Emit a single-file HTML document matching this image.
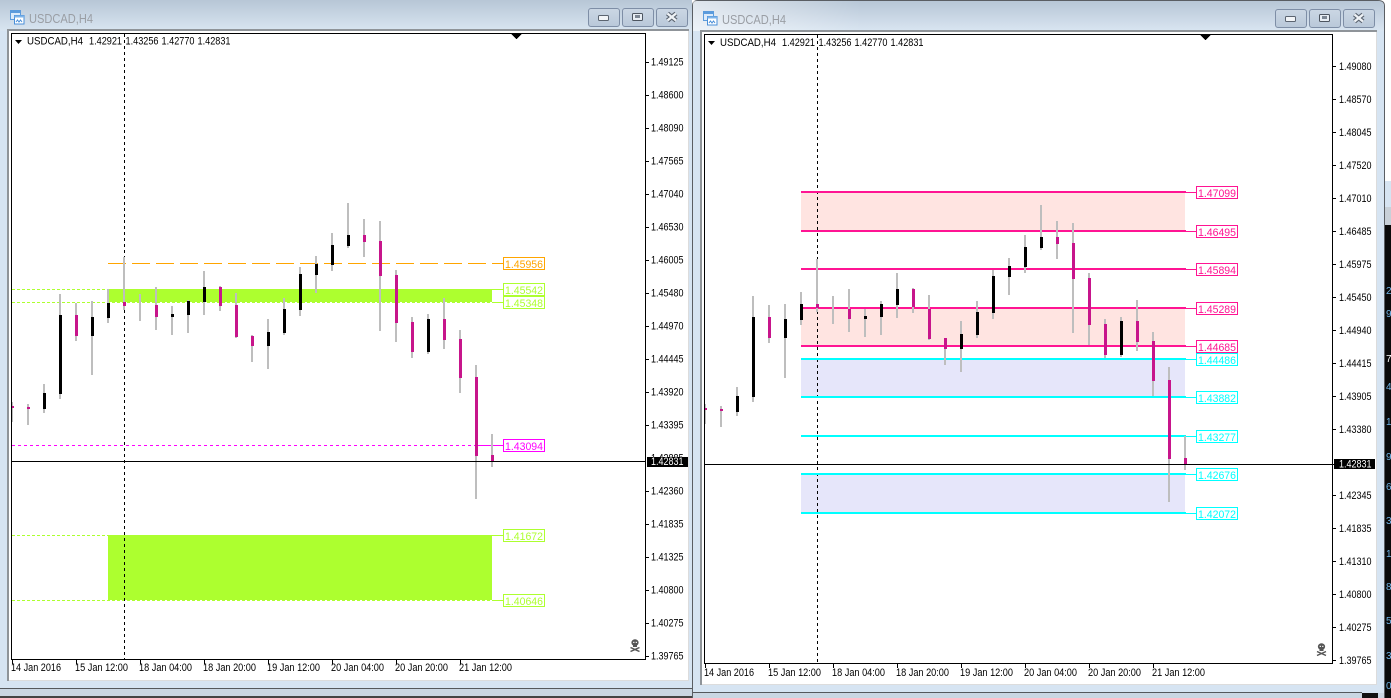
<!DOCTYPE html>
<html><head><meta charset="utf-8"><title>USDCAD,H4</title>
<style>
html,body{margin:0;padding:0;width:1391px;height:698px;overflow:hidden;background:#fff}
svg{display:block}
text{font-family:"Liberation Sans",sans-serif}
.a{font-size:10.8px;fill:#000;transform:translateY(-.5px)}
.l{font-size:11px}
.t{font-size:12.5px;fill:#9a9ea4}
</style></head><body>
<svg width="1391" height="698" viewBox="0 0 1391 698" xmlns="http://www.w3.org/2000/svg">
<defs>
<linearGradient id="tb" x1="0" y1="0" x2="0" y2="1"><stop offset="0" stop-color="#b7c6d6"/><stop offset="1" stop-color="#d9e5f1"/></linearGradient>
<linearGradient id="lt" x1="0" y1="0" x2="1" y2="0"><stop offset="0" stop-color="#fff" stop-opacity=".55"/><stop offset="1" stop-color="#fff" stop-opacity="0"/></linearGradient>
<linearGradient id="bt" x1="0" y1="0" x2="0" y2="1"><stop offset="0" stop-color="#cbd7e4"/><stop offset="1" stop-color="#b9c8d9"/></linearGradient>
<g id="ic">
<rect x=".5" y=".5" width="10" height="9" fill="#dcebfa" stroke="#5b9bdc"/><rect x=".5" y=".5" width="10" height="2.5" fill="#5b9bdc"/>
<rect x="4.5" y="5.5" width="9.5" height="8.5" fill="#fff" stroke="#4a8fd8"/><rect x="4.5" y="5.5" width="9.5" height="2" fill="#7db4ea"/>
<path d="M6 12l1.5-2 1.5 2 1.5-2 1.5 2" fill="none" stroke="#4a8fd8"/>
</g>
<g id="btn">
<rect x=".5" y=".5" width="31" height="18" rx="2.5" fill="url(#bt)" stroke="#7e8ea6"/>
</g>
<g id="sk" fill="#555">
<ellipse cx="5" cy="3.6" rx="3.6" ry="3.4"/><rect x="3" y="5.5" width="4" height="2.5"/>
<path d="M.5 8.5L9.5 12.5M9.5 8.5L.5 12.5" stroke="#555" stroke-width="1.5" fill="none"/>
<rect x="3.2" y="2.8" width="1.2" height="1.2" fill="#fff"/><rect x="5.7" y="2.8" width="1.2" height="1.2" fill="#fff"/>
</g>
</defs>

<!-- far-right background window -->
<rect x="1385" y="0" width="6" height="181" fill="#fff"/>
<rect x="1385" y="181" width="6" height="26" fill="#d6e4f2"/>
<rect x="1385" y="207" width="6" height="18" fill="#c8d0d8"/>
<rect x="1385" y="225" width="6" height="473" fill="#0a0a0a"/>
<g font-size="10" fill="#6fb4e6">
<text x="1386" y="294">2</text><text x="1386" y="317">9</text><text x="1386" y="362" fill="#fff">7</text><text x="1386" y="390">4</text><text x="1386" y="425">1</text><text x="1386" y="460">9</text><text x="1386" y="490">6</text><text x="1386" y="524">3</text><text x="1386" y="557">1</text><text x="1386" y="590">8</text><text x="1386" y="624">5</text><text x="1386" y="659">3</text><text x="1386" y="689">0</text>
</g>

<!-- LEFT WINDOW -->
<rect x="0" y="0" width="692" height="698" fill="#d6e4f2"/>
<rect x="0" y="0" width="692" height="31" fill="url(#tb)"/>
<rect x="0" y="688" width="692" height="1" fill="#55585c"/>
<rect x="0" y="689" width="692" height="7" fill="#cad6e2"/>
<rect x="0" y="696" width="692" height="2" fill="#444"/>
<rect x="7" y="29" width="682" height="2" fill="#8f9499"/>
<rect x="7" y="29" width="2" height="652" fill="#8f9499"/>
<rect x="9" y="31" width="679.5" height="650" fill="#fff"/>
<path d="M688.5 31V680.5H9" fill="none" stroke="#dcdcdc"/>
<use href="#ic" x="10" y="10"/>
<text class="t" x="29" y="23" textLength="64" lengthAdjust="spacingAndGlyphs">USDCAD,H4</text>
<use href="#btn" x="588" y="8"/><use href="#btn" x="622" y="8"/><use href="#btn" x="656" y="8"/>
<rect x="598.5" y="15.5" width="10" height="5" rx="1" fill="#f2f5f8" stroke="#5b6470"/>
<rect x="632.5" y="13.5" width="10" height="7" rx="1" fill="#e8eef4" stroke="#4d5560"/><rect x="635" y="15" width="5" height="3" fill="#7d8794"/>
<path d="M667.5 13.5L676 20.5M676 13.5L667.5 20.5" stroke="#5b6470" stroke-width="4.6" fill="none"/><path d="M667.5 13.5L676 20.5M676 13.5L667.5 20.5" stroke="#eef2f6" stroke-width="2.4" fill="none"/>

<!-- left zones -->
<g shape-rendering="crispEdges">
<rect x="108" y="289" width="384" height="13" fill="#adff2f"/>
<rect x="108" y="535" width="384" height="65" fill="#adff2f"/>
<g stroke="#adff2f" fill="none">
<path stroke-dasharray="3 2" d="M12 289.5H108M12 302.5H492M12 535.5H108M12 600.5H492"/>
<path d="M492 289.5H503M492 302.5H503M492 535.5H503M492 600.5H503"/>
<path stroke="#ffa500" stroke-dasharray="18 6" d="M108 263.5H503"/>
<path stroke="#ff00ff" stroke-dasharray="3 3" d="M12 445.5H476"/><path stroke="#ff00ff" d="M476 445.5H503"/>
</g>
<path d="M124.5 34V659" stroke="#000" stroke-dasharray="3 3" fill="none"/>
<!-- left candles -->
<path fill="none" stroke="#bebebe" stroke-width="2" d="M12 402V422M28 404V425M44 384V413M60 294V399M76 303V341M92 301V375M108 289V323M124 257V310M140 294V321M156 287V330M172 306V335M188 300V333M204 271V315M220 286V311M236 293V338M252 335V362M268 319V369M284 298V335M300 267V316M316 256V293M332 233V271M348 203V248M364 219V257M380 221V331M396 270V342M412 317V358M428 314V354M444 298V349M460 330V393M476 365V499M492 434V467"/>
<path fill="none" stroke="#000" stroke-width="3" d="M44.5 393V409M60.5 315V394M92.5 317V336M108.5 303V318M172.5 314V317M188.5 301V315M204.5 287V302M268.5 332V346M284.5 309V333M300.5 274V310M316.5 264V275M332.5 245V265M348.5 235V246M428.5 319V352"/>
<path fill="none" stroke="#c7158b" stroke-width="3" d="M12.5 406V408M28.5 407V409M76.5 315V336M124.5 302V306M156.5 305V317M220.5 287V306M236.5 305V337M252.5 336V346M364.5 235V242M380.5 241V276M396.5 275V323M412.5 322V352M444.5 319V340M460.5 339V378M476.5 377V456M492.5 455V462"/>
<path d="M12 461.5H646" stroke="#000" fill="none"/>
<rect x="11.5" y="33.5" width="634" height="626" fill="none" stroke="#000"/>
<path d="M511 34h11l-5.500 5z" fill="#000"/>
<path d="M646 62.500h3M646 95.500h3M646 128.500h3M646 161.500h3M646 194.500h3M646 227.500h3M646 260.500h3M646 293.500h3M646 326.500h3M646 359.500h3M646 392.500h3M646 425.500h3M646 491.500h3M646 524.500h3M646 557.500h3M646 590.500h3M646 623.500h3M646 656.500h3M12.500 660v4M76.500 660v4M140.500 660v4M204.500 660v4M268.500 660v4M332.500 660v4M396.500 660v4M460.500 660v4" stroke="#000" fill="none"/>
</g>
<path d="M15 40h7l-3.500 4z" fill="#000"/>
<g class="a">
<text class="a" x="27" y="45.500" textLength="56" lengthAdjust="spacingAndGlyphs">USDCAD,H4</text>
<text class="a" x="89" y="45.500" textLength="33" lengthAdjust="spacingAndGlyphs">1.42921</text>
<text class="a" x="125.500" y="45.500" textLength="33" lengthAdjust="spacingAndGlyphs">1.43256</text>
<text class="a" x="161.500" y="45.500" textLength="33" lengthAdjust="spacingAndGlyphs">1.42770</text>
<text class="a" x="197.500" y="45.500" textLength="33" lengthAdjust="spacingAndGlyphs">1.42831</text>
<text class="a" x="651" y="66.500" textLength="32.500" lengthAdjust="spacingAndGlyphs">1.49125</text>
<text class="a" x="651" y="99.500" textLength="32.500" lengthAdjust="spacingAndGlyphs">1.48600</text>
<text class="a" x="651" y="132.500" textLength="32.500" lengthAdjust="spacingAndGlyphs">1.48090</text>
<text class="a" x="651" y="165.500" textLength="32.500" lengthAdjust="spacingAndGlyphs">1.47565</text>
<text class="a" x="651" y="198.500" textLength="32.500" lengthAdjust="spacingAndGlyphs">1.47040</text>
<text class="a" x="651" y="231.500" textLength="32.500" lengthAdjust="spacingAndGlyphs">1.46530</text>
<text class="a" x="651" y="264.500" textLength="32.500" lengthAdjust="spacingAndGlyphs">1.46005</text>
<text class="a" x="651" y="297.500" textLength="32.500" lengthAdjust="spacingAndGlyphs">1.45480</text>
<text class="a" x="651" y="330.500" textLength="32.500" lengthAdjust="spacingAndGlyphs">1.44970</text>
<text class="a" x="651" y="363.500" textLength="32.500" lengthAdjust="spacingAndGlyphs">1.44445</text>
<text class="a" x="651" y="396.500" textLength="32.500" lengthAdjust="spacingAndGlyphs">1.43920</text>
<text class="a" x="651" y="429.500" textLength="32.500" lengthAdjust="spacingAndGlyphs">1.43395</text>
<text class="a" x="651" y="462.500" textLength="32.500" lengthAdjust="spacingAndGlyphs">1.42885</text>
<text class="a" x="651" y="495.500" textLength="32.500" lengthAdjust="spacingAndGlyphs">1.42360</text>
<text class="a" x="651" y="528.500" textLength="32.500" lengthAdjust="spacingAndGlyphs">1.41835</text>
<text class="a" x="651" y="561.500" textLength="32.500" lengthAdjust="spacingAndGlyphs">1.41325</text>
<text class="a" x="651" y="594.500" textLength="32.500" lengthAdjust="spacingAndGlyphs">1.40800</text>
<text class="a" x="651" y="627.500" textLength="32.500" lengthAdjust="spacingAndGlyphs">1.40275</text>
<text class="a" x="651" y="660.500" textLength="32.500" lengthAdjust="spacingAndGlyphs">1.39765</text>
<text class="a" x="11" y="672" textLength="50" lengthAdjust="spacingAndGlyphs">14 Jan 2016</text>
<text class="a" x="75" y="672" textLength="53" lengthAdjust="spacingAndGlyphs">15 Jan 12:00</text>
<text class="a" x="139" y="672" textLength="53" lengthAdjust="spacingAndGlyphs">18 Jan 04:00</text>
<text class="a" x="203" y="672" textLength="53" lengthAdjust="spacingAndGlyphs">18 Jan 20:00</text>
<text class="a" x="267" y="672" textLength="53" lengthAdjust="spacingAndGlyphs">19 Jan 12:00</text>
<text class="a" x="331" y="672" textLength="53" lengthAdjust="spacingAndGlyphs">20 Jan 04:00</text>
<text class="a" x="395" y="672" textLength="53" lengthAdjust="spacingAndGlyphs">20 Jan 20:00</text>
<text class="a" x="459" y="672" textLength="53" lengthAdjust="spacingAndGlyphs">21 Jan 12:00</text>
</g>
<rect x="647" y="457" width="41" height="10" fill="#000" shape-rendering="crispEdges"/>
<text class="a" style="fill:#fff" x="651" y="465.500" textLength="32.500" lengthAdjust="spacingAndGlyphs">1.42831</text>
<use href="#sk" x="630" y="639"/>
<!-- left labels -->
<g fill="#fff" shape-rendering="crispEdges">
<rect x="503.500" y="257.500" width="41" height="12" stroke="#ffa500"/>
<rect x="503.500" y="283.500" width="41" height="12" stroke="#adff2f"/>
<rect x="503.500" y="296.500" width="41" height="12" stroke="#adff2f"/>
<rect x="503.500" y="439.500" width="41" height="12" stroke="#ff00ff"/>
<rect x="503.500" y="529.500" width="41" height="12" stroke="#adff2f"/>
<rect x="503.500" y="594.500" width="41" height="12" stroke="#adff2f"/>
</g>
<text class="l" fill="#ffa500" x="505" y="268" textLength="38" lengthAdjust="spacingAndGlyphs">1.45956</text>
<text class="l" fill="#adff2f" x="505" y="294" textLength="38" lengthAdjust="spacingAndGlyphs">1.45542</text>
<text class="l" fill="#adff2f" x="505" y="307" textLength="38" lengthAdjust="spacingAndGlyphs">1.45348</text>
<text class="l" fill="#ff00ff" x="505" y="450" textLength="38" lengthAdjust="spacingAndGlyphs">1.43094</text>
<text class="l" fill="#adff2f" x="505" y="540" textLength="38" lengthAdjust="spacingAndGlyphs">1.41672</text>
<text class="l" fill="#adff2f" x="505" y="605" textLength="38" lengthAdjust="spacingAndGlyphs">1.40646</text>

<!-- RIGHT WINDOW -->
<path d="M692.500 698V6Q692.500 .5 698 .5H1378Q1384.500 .5 1384.500 6V698Z" fill="#d6e4f2" stroke="#5a5e63"/>
<path d="M693 31V6Q693 1 698 1H1378Q1384 1 1384 6V31Z" fill="url(#tb)"/>
<rect x="693" y="1" width="170" height="30" fill="url(#lt)"/>
<rect x="700" y="30" width="677" height="2" fill="#8f9499"/>
<rect x="700" y="30" width="2" height="655" fill="#8f9499"/>
<rect x="702" y="32" width="674.500" height="652" fill="#fff"/>
<path d="M1376.500 32V684.500H702" fill="none" stroke="#dcdcdc"/>
<rect x="693" y="692" width="669" height="1" fill="#55585c"/>
<rect x="693" y="693" width="691" height="5" fill="#cad6e2"/>
<rect x="1362" y="693" width="16" height="5" fill="#111"/>
<use href="#ic" x="703" y="11"/>
<text class="t" x="722" y="24" textLength="64" lengthAdjust="spacingAndGlyphs">USDCAD,H4</text>
<use href="#btn" x="1275" y="9"/><use href="#btn" x="1309" y="9"/><use href="#btn" x="1343" y="9"/>
<rect x="1285.500" y="16.500" width="10" height="5" rx="1" fill="#f2f5f8" stroke="#5b6470"/>
<rect x="1319.500" y="14.500" width="10" height="7" rx="1" fill="#e8eef4" stroke="#4d5560"/><rect x="1322" y="16" width="5" height="3" fill="#7d8794"/>
<path d="M1354.500 14.500L1363 21.500M1363 14.500L1354.500 21.500" stroke="#5b6470" stroke-width="4.600" fill="none"/><path d="M1354.500 14.500L1363 21.500M1363 14.500L1354.500 21.500" stroke="#eef2f6" stroke-width="2.400" fill="none"/>

<g shape-rendering="crispEdges">
<rect x="801" y="192" width="384" height="39" fill="#ffe4e1"/>
<rect x="801" y="308" width="384" height="38" fill="#ffe4e1"/>
<rect x="801" y="359" width="384" height="38" fill="#e6e6fa"/>
<rect x="801" y="474" width="384" height="39" fill="#e6e6fa"/>
<path d="M817.500 35V663" stroke="#000" stroke-dasharray="3 3" fill="none"/>
<g fill="none" stroke-width="2">
<path stroke="#ff1493" d="M801 192H1186M801 231H1186M801 269H1186M801 308H1186M801 346H1186"/>
<path stroke="#00ffff" d="M801 359H1186M801 397H1186M801 436H1186M801 474H1186M801 513H1186"/>
</g>
<path fill="none" stroke="#ff1493" d="M1186 192.500H1196M1186 231.500H1196M1186 269.500H1196M1186 308.500H1196M1186 346.500H1196"/>
<path fill="none" stroke="#00ffff" d="M1186 359.500H1196M1186 397.500H1196M1186 436.500H1196M1186 474.500H1196M1186 513.500H1196"/>
<path fill="none" stroke="#bebebe" stroke-width="2" d="M705 404V424M721 406V427M737 387V416M753 296V402M769 305V343M785 304V378M801 292V325M817 259V312M833 296V324M849 289V332M865 309V337M881 301V335M897 273V318M913 288V313M929 295V340M945 338V365M961 321V372M977 301V338M993 270V319M1009 258V295M1025 235V273M1041 205V250M1057 221V259M1073 223V333M1089 273V345M1105 319V358M1121 317V357M1137 300V351M1153 332V396M1169 367V502M1185 436V470"/>
<path fill="none" stroke="#000" stroke-width="3" d="M737.500 396V412M753.500 317V397M785.500 319V338M801.500 304V320M865.500 316V319M881.500 304V317M897.500 289V305M961.500 334V349M977.500 312V335M993.500 276V313M1009.500 266V277M1025.500 247V267M1041.500 237V248M1121.500 321V355"/>
<path fill="none" stroke="#c7158b" stroke-width="3" d="M705.500 408V410M721.500 409V411M769.500 317V338M817.500 304V308M849.500 309V319M913.500 289V307M929.500 309V339M945.500 338V349M1057.500 237V244M1073.500 243V279M1089.500 278V325M1105.500 324V355M1137.500 321V342M1153.500 341V381M1169.500 380V459M1185.500 458V465"/>
<path d="M705 464.500H1334" stroke="#000" fill="none"/>
<rect x="704.500" y="34.500" width="628" height="629" fill="none" stroke="#000"/>
<path d="M1200 35h11l-5.500 5z" fill="#000"/>
<path d="M1333 66.500h3M1333 99.500h3M1333 132.500h3M1333 165.500h3M1333 198.500h3M1333 231.500h3M1333 264.500h3M1333 297.500h3M1333 330.500h3M1333 363.500h3M1333 396.500h3M1333 429.500h3M1333 495.500h3M1333 528.500h3M1333 561.500h3M1333 594.500h3M1333 627.500h3M1333 660.500h3M705.500 664v4M769.500 664v4M833.500 664v4M897.500 664v4M961.500 664v4M1025.500 664v4M1089.500 664v4M1153.500 664v4" stroke="#000" fill="none"/>
</g>
<path d="M708 41h7l-3.500 4z" fill="#000"/>
<text class="a" x="720" y="46.500" textLength="56" lengthAdjust="spacingAndGlyphs">USDCAD,H4</text>
<text class="a" x="782" y="46.500" textLength="33" lengthAdjust="spacingAndGlyphs">1.42921</text>
<text class="a" x="818.500" y="46.500" textLength="33" lengthAdjust="spacingAndGlyphs">1.43256</text>
<text class="a" x="854.500" y="46.500" textLength="33" lengthAdjust="spacingAndGlyphs">1.42770</text>
<text class="a" x="890.500" y="46.500" textLength="33" lengthAdjust="spacingAndGlyphs">1.42831</text>
<text class="a" x="1339" y="70.500" textLength="32.500" lengthAdjust="spacingAndGlyphs">1.49080</text>
<text class="a" x="1339" y="103.500" textLength="32.500" lengthAdjust="spacingAndGlyphs">1.48570</text>
<text class="a" x="1339" y="136.500" textLength="32.500" lengthAdjust="spacingAndGlyphs">1.48045</text>
<text class="a" x="1339" y="169.500" textLength="32.500" lengthAdjust="spacingAndGlyphs">1.47520</text>
<text class="a" x="1339" y="202.500" textLength="32.500" lengthAdjust="spacingAndGlyphs">1.47010</text>
<text class="a" x="1339" y="235.500" textLength="32.500" lengthAdjust="spacingAndGlyphs">1.46485</text>
<text class="a" x="1339" y="268.500" textLength="32.500" lengthAdjust="spacingAndGlyphs">1.45975</text>
<text class="a" x="1339" y="301.500" textLength="32.500" lengthAdjust="spacingAndGlyphs">1.45450</text>
<text class="a" x="1339" y="334.500" textLength="32.500" lengthAdjust="spacingAndGlyphs">1.44940</text>
<text class="a" x="1339" y="367.500" textLength="32.500" lengthAdjust="spacingAndGlyphs">1.44415</text>
<text class="a" x="1339" y="400.500" textLength="32.500" lengthAdjust="spacingAndGlyphs">1.43905</text>
<text class="a" x="1339" y="433.500" textLength="32.500" lengthAdjust="spacingAndGlyphs">1.43380</text>
<text class="a" x="1339" y="499.500" textLength="32.500" lengthAdjust="spacingAndGlyphs">1.42345</text>
<text class="a" x="1339" y="532.500" textLength="32.500" lengthAdjust="spacingAndGlyphs">1.41835</text>
<text class="a" x="1339" y="565.500" textLength="32.500" lengthAdjust="spacingAndGlyphs">1.41310</text>
<text class="a" x="1339" y="598.500" textLength="32.500" lengthAdjust="spacingAndGlyphs">1.40800</text>
<text class="a" x="1339" y="631.500" textLength="32.500" lengthAdjust="spacingAndGlyphs">1.40275</text>
<text class="a" x="1339" y="664.500" textLength="32.500" lengthAdjust="spacingAndGlyphs">1.39765</text>
<text class="a" x="704" y="676.500" textLength="50" lengthAdjust="spacingAndGlyphs">14 Jan 2016</text>
<text class="a" x="768" y="676.500" textLength="53" lengthAdjust="spacingAndGlyphs">15 Jan 12:00</text>
<text class="a" x="832" y="676.500" textLength="53" lengthAdjust="spacingAndGlyphs">18 Jan 04:00</text>
<text class="a" x="896" y="676.500" textLength="53" lengthAdjust="spacingAndGlyphs">18 Jan 20:00</text>
<text class="a" x="960" y="676.500" textLength="53" lengthAdjust="spacingAndGlyphs">19 Jan 12:00</text>
<text class="a" x="1024" y="676.500" textLength="53" lengthAdjust="spacingAndGlyphs">20 Jan 04:00</text>
<text class="a" x="1088" y="676.500" textLength="53" lengthAdjust="spacingAndGlyphs">20 Jan 20:00</text>
<text class="a" x="1152" y="676.500" textLength="53" lengthAdjust="spacingAndGlyphs">21 Jan 12:00</text>
<rect x="1334" y="459" width="41" height="10" fill="#000" shape-rendering="crispEdges"/>
<text class="a" style="fill:#fff" x="1339" y="468" textLength="32.500" lengthAdjust="spacingAndGlyphs">1.42831</text>
<use href="#sk" x="1316.500" y="643"/>
<!-- right labels -->
<g fill="#fff" shape-rendering="crispEdges">
<rect x="1196.500" y="186.500" width="41" height="12" stroke="#ff1493"/>
<rect x="1196.500" y="225.500" width="41" height="12" stroke="#ff1493"/>
<rect x="1196.500" y="263.500" width="41" height="12" stroke="#ff1493"/>
<rect x="1196.500" y="302.500" width="41" height="12" stroke="#ff1493"/>
<rect x="1196.500" y="353.500" width="41" height="12" stroke="#00ffff"/>
<rect x="1196.500" y="340.500" width="41" height="12" stroke="#ff1493"/>
<rect x="1196.500" y="391.500" width="41" height="12" stroke="#00ffff"/>
<rect x="1196.500" y="430.500" width="41" height="12" stroke="#00ffff"/>
<rect x="1196.500" y="468.500" width="41" height="12" stroke="#00ffff"/>
<rect x="1196.500" y="507.500" width="41" height="12" stroke="#00ffff"/>
</g>
<text class="l" fill="#ff1493" x="1198" y="197" textLength="38" lengthAdjust="spacingAndGlyphs">1.47099</text>
<text class="l" fill="#ff1493" x="1198" y="236" textLength="38" lengthAdjust="spacingAndGlyphs">1.46495</text>
<text class="l" fill="#ff1493" x="1198" y="274" textLength="38" lengthAdjust="spacingAndGlyphs">1.45894</text>
<text class="l" fill="#ff1493" x="1198" y="313" textLength="38" lengthAdjust="spacingAndGlyphs">1.45289</text>
<text class="l" fill="#ff1493" x="1198" y="351" textLength="38" lengthAdjust="spacingAndGlyphs">1.44685</text>
<text class="l" fill="#00ffff" x="1198" y="364" textLength="38" lengthAdjust="spacingAndGlyphs">1.44486</text>
<text class="l" fill="#00ffff" x="1198" y="402" textLength="38" lengthAdjust="spacingAndGlyphs">1.43882</text>
<text class="l" fill="#00ffff" x="1198" y="441" textLength="38" lengthAdjust="spacingAndGlyphs">1.43277</text>
<text class="l" fill="#00ffff" x="1198" y="479" textLength="38" lengthAdjust="spacingAndGlyphs">1.42676</text>
<text class="l" fill="#00ffff" x="1198" y="518" textLength="38" lengthAdjust="spacingAndGlyphs">1.42072</text>
</svg>
</body></html>
